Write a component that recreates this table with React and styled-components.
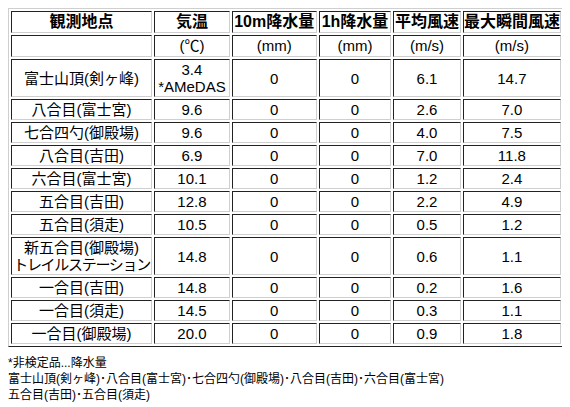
import React from "react";
import styled, {createGlobalStyle} from "styled-components";

const GlobalStyle = createGlobalStyle`
  body {
    margin: 8px;
    background: #fff;
    color: #000;
    font-family: "Liberation Sans", "Noto Sans CJK JP", sans-serif;
  }
`

const Table = styled.table`
  table-layout: fixed;
  width: 556px;
  border-collapse: separate;
  border-spacing: 2px;
  border: 1px solid;
  border-color: #cfcfcf #222 #222 #cfcfcf;
`

const Th = styled.th`
  border: 1px solid;
  border-color: #222 #cfcfcf #cfcfcf #222;
  padding: 1px 0;
  font-size: 16px;
  line-height: 18px;
  font-weight: bold;
  text-align: center;
  white-space: nowrap;
  overflow: hidden;
`

const Td = styled.td`
  border: 1px solid;
  border-color: #222 #cfcfcf #cfcfcf #222;
  padding: 1px 0;
  font-size: 15px;
  line-height: 17px;
  text-align: center;
  white-space: nowrap;
  overflow: hidden;
`

const Unit = styled(Td)`
  line-height: 18px;
`

// long katakana name is squeezed to fit the first column
const Tight = styled.span`
  letter-spacing: ${p => p.$squeeze}px;
`

const Note = styled.div`
  margin-top: 8px;
  font-size: 12px;
  line-height: 16px;
`

const widths = [138, 74, 83, 71, 66, 96];

const headers = ["観測地点", "気温", "10m降水量", "1h降水量", "平均風速", "最大瞬間風速"];
const units = ["", "(℃)", "(mm)", "(mm)", "(m/s)", "(m/s)"];

const rows = [
    [["富士山頂(剣ヶ峰)"], ["3.4", "*AMeDAS"], "0", "0", "6.1", "14.7"],
    [["八合目(富士宮)"], ["9.6"], "0", "0", "2.6", "7.0"],
    [["七合四勺(御殿場)"], ["9.6"], "0", "0", "4.0", "7.5"],
    [["八合目(吉田)"], ["6.9"], "0", "0", "7.0", "11.8"],
    [["六合目(富士宮)"], ["10.1"], "0", "0", "1.2", "2.4"],
    [["五合目(吉田)"], ["12.8"], "0", "0", "2.2", "4.9"],
    [["五合目(須走)"], ["10.5"], "0", "0", "0.5", "1.2"],
    [["新五合目(御殿場)", "トレイルステーション"], ["14.8"], "0", "0", "0.6", "1.1"],
    [["一合目(吉田)"], ["14.8"], "0", "0", "0.2", "1.6"],
    [["一合目(須走)"], ["14.5"], "0", "0", "0.3", "1.1"],
    [["一合目(御殿場)"], ["20.0"], "0", "0", "0.9", "1.8"],
];

const Lines = ({lines}) => lines.map((line, i) => (
    <React.Fragment key={i}>
        {i > 0 && <br/>}
        {line.length > 9 ? <Tight $squeeze={-1.3}>{line}</Tight> : line}
    </React.Fragment>
));

const App = () => {
    return (
        <>
            <GlobalStyle/>
            <Table>
                <colgroup>
                    {widths.map((w, i) => <col key={i} style={{width: w}}/>)}
                </colgroup>
                <tbody>
                <tr>
                    {headers.map(h => <Th key={h}>{h}</Th>)}
                </tr>
                <tr>
                    {units.map((u, i) => <Unit key={i}>{u}</Unit>)}
                </tr>
                {rows.map(row => (
                    <tr key={row[0][0]}>
                        <Td><Lines lines={row[0]}/></Td>
                        <Td><Lines lines={row[1]}/></Td>
                        {row.slice(2).map((v, i) => <Td key={i}>{v}</Td>)}
                    </tr>
                ))}
                </tbody>
            </Table>
            <Note>
                *非検定品...降水量<br/>
                富士山頂(剣ヶ峰)･八合目(富士宮)･七合四勺(御殿場)･八合目(吉田)･六合目(富士宮)<br/>
                五合目(吉田)･五合目(須走)
            </Note>
        </>
    );
}

export default App;
